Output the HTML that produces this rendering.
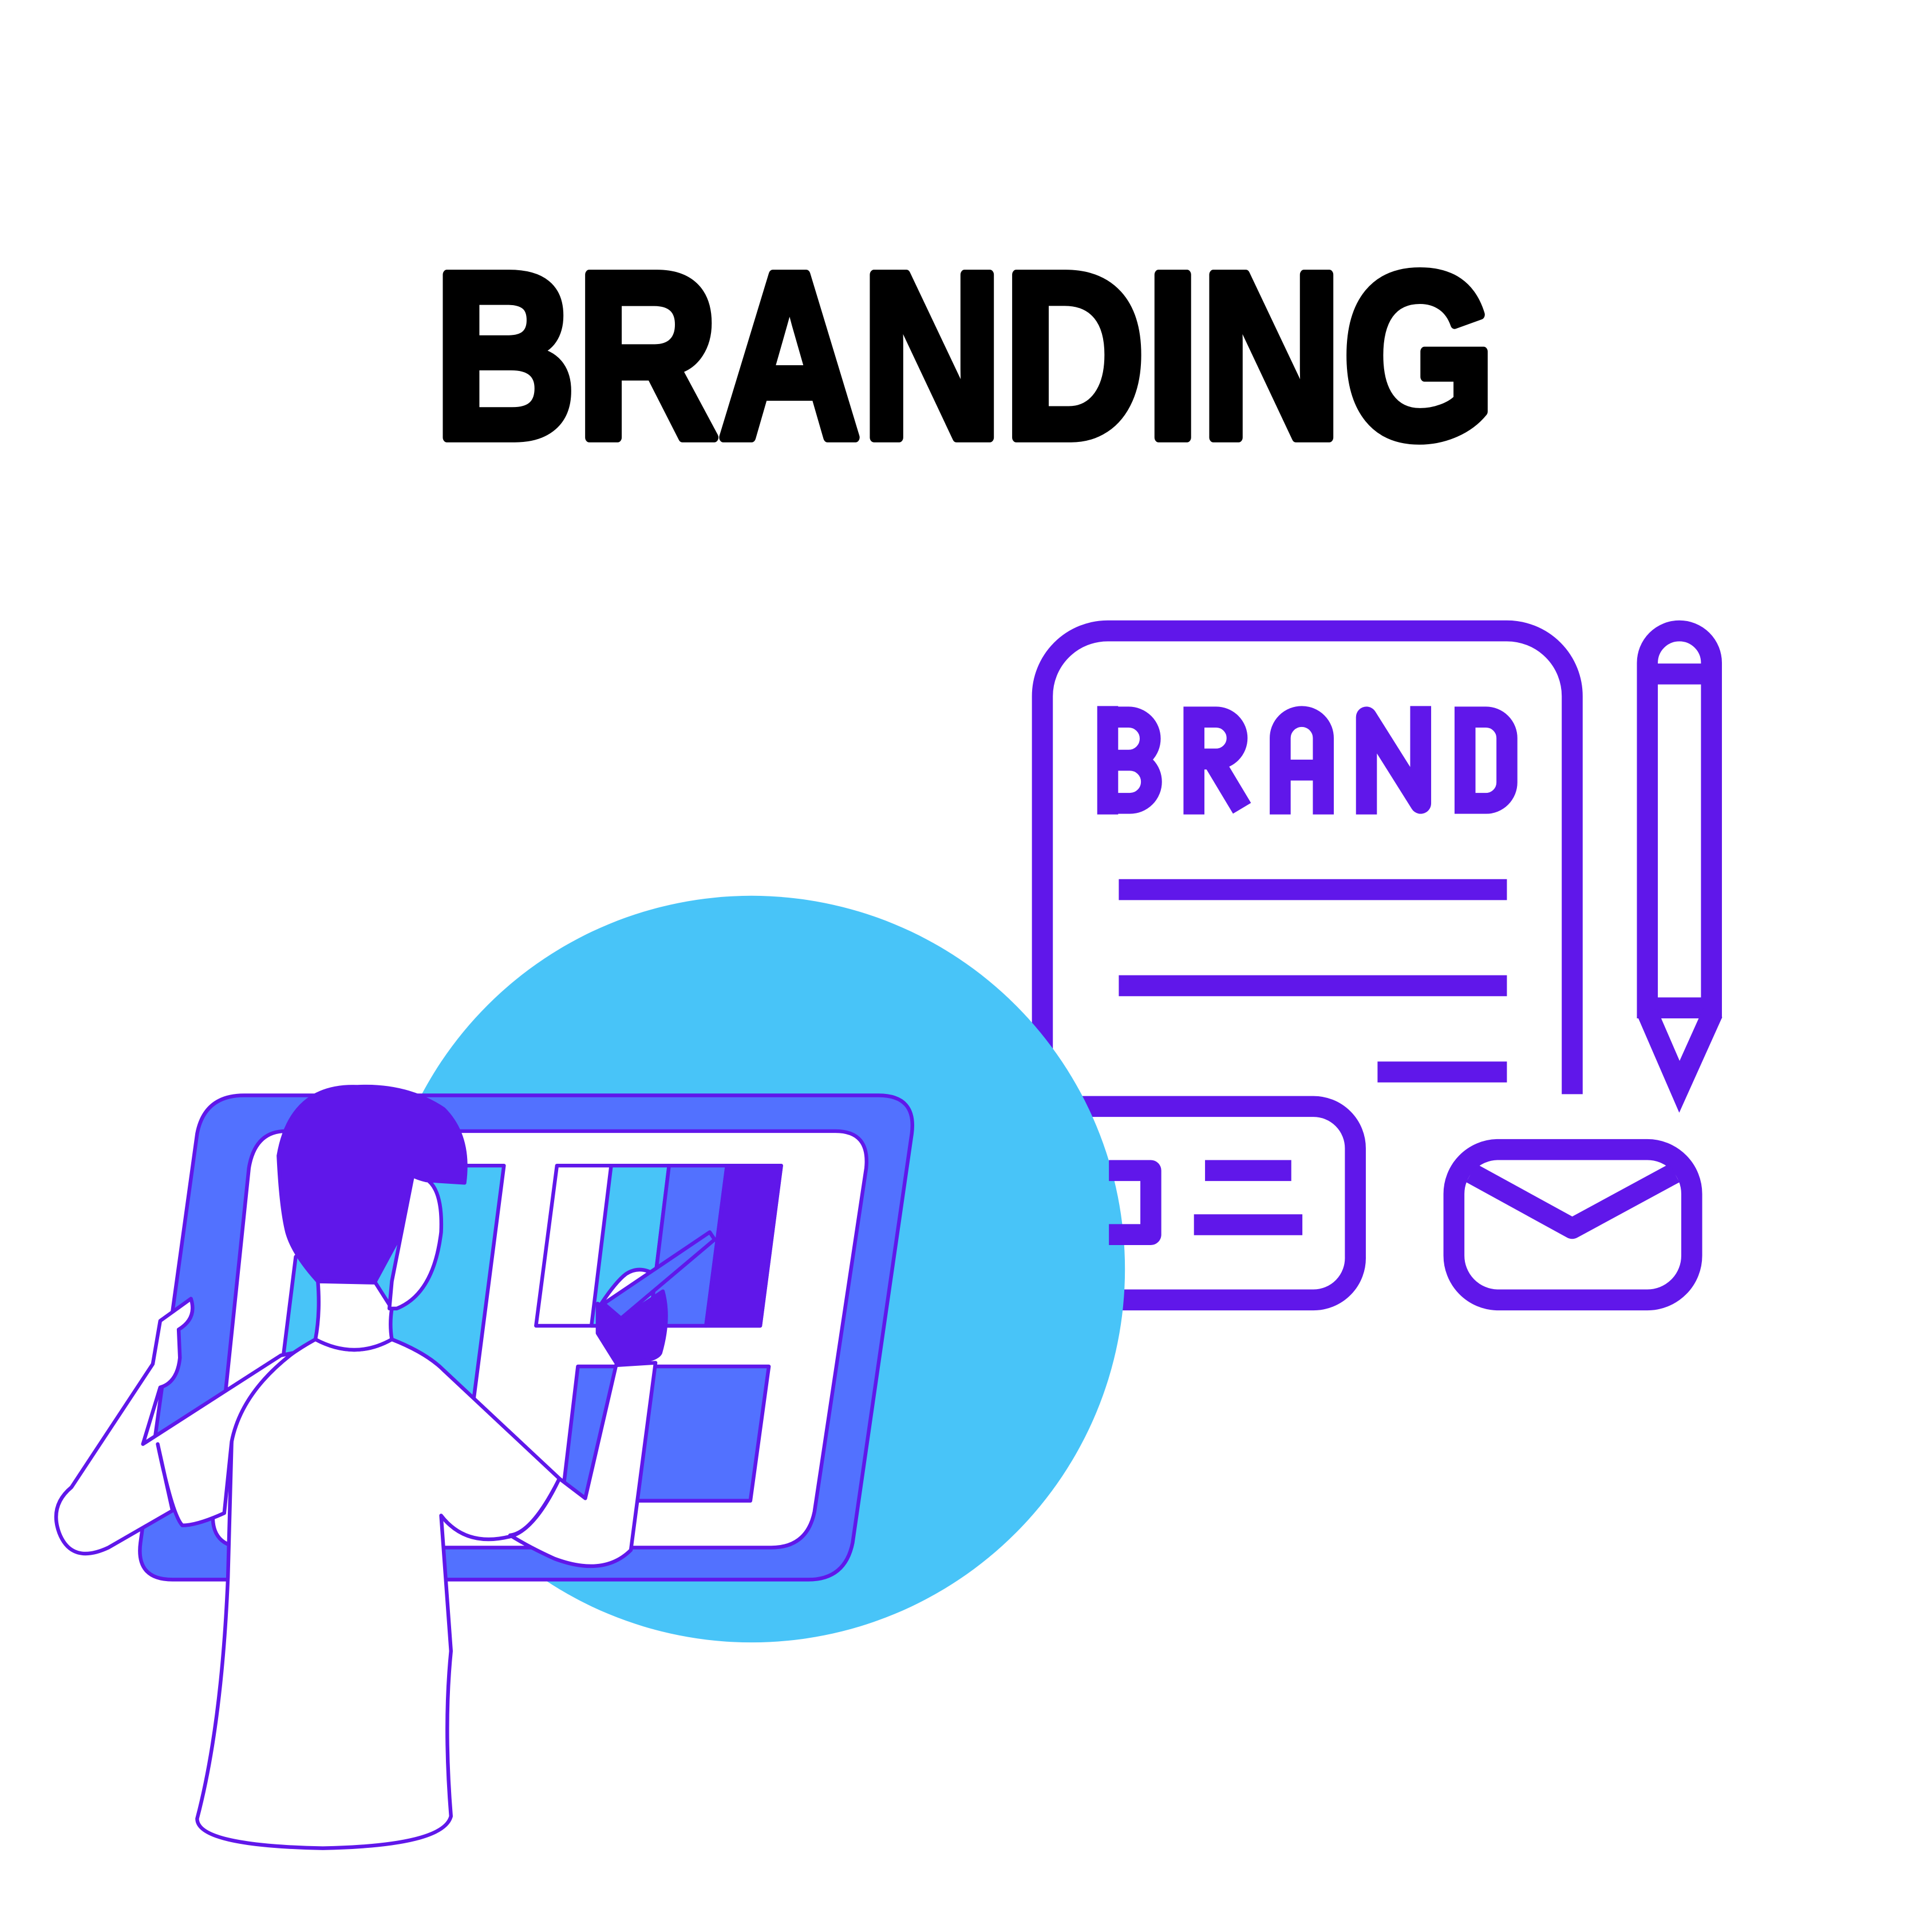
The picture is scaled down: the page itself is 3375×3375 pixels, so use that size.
<!DOCTYPE html>
<html><head><style>html,body{margin:0;padding:0;background:#fff}svg{display:block}</style></head>
<body>
<svg width="3375" height="3375" viewBox="0 0 1568 1568" xmlns="http://www.w3.org/2000/svg">
<rect width="1568" height="1568" fill="#fff"/>
<text x="352" y="355" font-family="Liberation Sans, sans-serif" font-weight="bold" font-size="192" textLength="862" lengthAdjust="spacingAndGlyphs" fill="#000" stroke="#000" stroke-width="8" stroke-linejoin="round">BRANDING</text>

<g fill="none" stroke="#6017ea" stroke-width="17">
<path d="M846 880 V565 A53 53 0 0 1 899 512 H1223 A53 53 0 0 1 1276 565 V888"/>
<path d="M1337 818 V538 A26 26 0 0 1 1389 538 V818 Z M1337 547 H1389"/>
<path d="M1337 822 L1363 882 L1390 822"/>
<line x1="908" y1="722" x2="1223" y2="722"/>
<line x1="908" y1="800" x2="1223" y2="800"/>
<line x1="1118" y1="870" x2="1223" y2="870"/>
<path d="M1215 933 H1337 A36 36 0 0 1 1373 969 V1019 A36 36 0 0 1 1337 1055 H1215 A36 36 0 0 1 1180 1019 V969 A36 36 0 0 1 1215 933 Z"/>
<path d="M1194 952 L1276 997 L1359 952" stroke-linejoin="round"/>
<path d="M899 573 V661 M899 582 H916 A17 17 0 0 1 916 617 H899 M899 617 H917 A17 17 0 0 1 917 652 H899"/>
<path d="M969 661 V582 H987 A17 17 0 0 1 987 616 H969 M984 616 L1008 656"/>
<path d="M1039 661 V599 A17 17 0 0 1 1074 599 V661 M1039 625 H1074"/>
<path d="M1109 661 V582 L1153 652 V573" stroke-linejoin="round"/>
<path d="M1189 652 V582 H1206 A17 17 0 0 1 1223 599 V635 A17 17 0 0 1 1206 652 Z"/>
<path d="M870 898 H1066 A34 34 0 0 1 1100 932 V1020 A34 34 0 0 1 1066 1055 H900"/>
</g>

<circle cx="610" cy="1030" r="303" fill="#48c4f8"/>

<g fill="none" stroke="#6017ea" stroke-width="17">
<line x1="978" y1="950" x2="1048" y2="950"/>
<line x1="969" y1="994" x2="1057" y2="994"/>
<path d="M900 950 H934 V1002 H900" stroke-linejoin="round"/>
</g>

<g stroke="#6017ea" stroke-width="3" stroke-linejoin="round">
<path d="M198 889 H713 Q744 889 740 920 L692 1252 Q686 1282 656 1282 H140 Q110 1282 114 1252 L160 920 Q166 889 198 889 Z" fill="#5271ff"/>
<path d="M232 918 H678 Q706 918 703 948 L661 1227 Q655 1256 626 1256 H200 Q170 1256 173 1226 L202 948 Q207 918 232 918 Z" fill="#fff"/>
<path d="M330 946 H409 L380 1170 L230 1100 L240 1020 Z" fill="#48c4f8"/>
<path d="M452 946 H634 L617 1076 H435 Z" fill="#fff"/>
<path d="M496 946 H543 L527 1076 H480 Z" fill="#48c4f8"/>
<path d="M543 946 H590 L573 1076 H527 Z" fill="#5271ff"/>
<path d="M590 946 H634 L617 1076 H573 Z" fill="#6017ea"/>
<path d="M469 1109 H624 L609 1218 H456 Z" fill="#5271ff"/>

<path d="M160 1476 Q180 1400 185 1280 L188 1170 Q196 1120 256 1087 Q288 1104 318 1087 Q346 1098 360 1112 L454 1200 Q432 1244 414 1246 Q430 1256 450 1265 Q490 1280 512 1258 L532 1106 L500 1108 L475 1216 L454 1200 Q434 1242 414 1247 Q378 1256 358 1230 L366 1340 Q360 1400 366 1474 Q360 1498 262 1500 Q160 1498 160 1476 Z" fill="#fff"/>
<path d="M58 1207 L124 1107 L130 1072 L155 1054 Q160 1070 145 1079 L146 1102 Q144 1122 130 1126 L116 1172 L228 1100 L238 1098 Q196 1130 188 1170 L182 1228 Q160 1238 148 1238 Q140 1230 128 1172 L140 1226 L88 1256 Q58 1270 48 1244 Q40 1222 58 1207 Z" fill="#fff"/>
<path d="M258 1040 L304 1040 L318 1062 Q316 1075 318 1087 Q288 1104 256 1087 Q260 1066 258 1040 Z" fill="#fff"/>
<path d="M335 954 Q360 954 358 1000 Q352 1050 322 1062 L316 1062 L318 1040 Z" fill="#fff"/>
<path d="M226 938 Q236 880 290 882 Q330 880 360 900 Q382 922 377 960 L346 958 Q338 956 335 954 L324 1004 L304 1041 L258 1040 Q238 1018 233 1000 Q228 980 226 938 Z" fill="#6017ea"/>
<path d="M485 1082 L500 1106 Q532 1106 536 1098 Q544 1070 538 1048 Q520 1060 505 1070 L485 1058 Z" fill="#6017ea"/>
<path d="M488 1058 Q500 1040 508 1034 Q520 1026 534 1036 L500 1066 Z" fill="#fff"/>
<path d="M490 1058 L576 1000 L580 1006 L504 1070 Z" fill="#5271ff"/>
</g>
</svg>
</body></html>
